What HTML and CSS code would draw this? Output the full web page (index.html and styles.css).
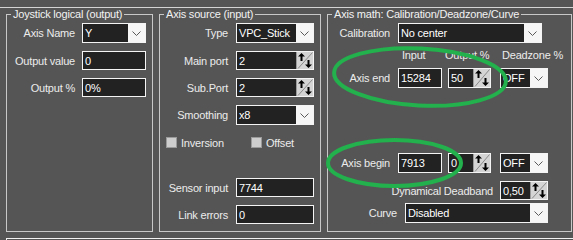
FILE: index.html
```html
<!DOCTYPE html>
<html lang="en">
<head>
    <meta charset="UTF-8">
    <meta name="viewport" content="width=device-width, initial-scale=1">
    <link rel="stylesheet" href="styles.css">
</head>
<body>

<div class="frame-top"></div>

<div class="groups">

    <!-- Joystick logical (output) -->
    <fieldset class="group g-output">
        <legend>Joystick logical (output)</legend>
        <div class="form form-output">
            <label>Axis Name</label>
            <div class="combo">
                <span class="combo-text">Y</span>
                <span class="combo-btn"><svg width="9" height="5" viewBox="0 0 9 5"><path d="M0.5 0.5 L4.5 4.5 L8.5 0.5" fill="none" stroke="#5a5a5a"/></svg></span>
            </div>
            <label>Output value</label>
            <div class="edit">0</div>
            <label>Output %</label>
            <div class="edit">0%</div>
        </div>
    </fieldset>

    <!-- Axis source (input) -->
    <fieldset class="group g-source">
        <legend>Axis source (input)</legend>
        <div class="form form-source">
            <label>Type</label>
            <div class="combo">
                <span class="combo-text">VPC_Stick</span>
                <span class="combo-btn"><svg width="9" height="5" viewBox="0 0 9 5"><path d="M0.5 0.5 L4.5 4.5 L8.5 0.5" fill="none" stroke="#5a5a5a"/></svg></span>
            </div>
            <label>Main port</label>
            <div class="edit spin">
                <span class="spin-text">2</span>
                <span class="spin-btn"><svg width="16" height="17" viewBox="0 0 16 17"><path d="M1 16.5 L15.5 0.5" stroke="#8a8a8a"/><path d="M4.5 1 L1 4.5 H3.5 V9 H5.5 V4.5 H8 Z" fill="#000"/><path d="M11.5 16 L8 12.5 H10.5 V8 H12.5 V12.5 H15 Z" fill="#000"/></svg></span>
            </div>
            <label>Sub.Port</label>
            <div class="edit spin">
                <span class="spin-text">2</span>
                <span class="spin-btn"><svg width="16" height="17" viewBox="0 0 16 17"><path d="M1 16.5 L15.5 0.5" stroke="#8a8a8a"/><path d="M4.5 1 L1 4.5 H3.5 V9 H5.5 V4.5 H8 Z" fill="#000"/><path d="M11.5 16 L8 12.5 H10.5 V8 H12.5 V12.5 H15 Z" fill="#000"/></svg></span>
            </div>
            <label>Smoothing</label>
            <div class="combo">
                <span class="combo-text">x8</span>
                <span class="combo-btn"><svg width="9" height="5" viewBox="0 0 9 5"><path d="M0.5 0.5 L4.5 4.5 L8.5 0.5" fill="none" stroke="#5a5a5a"/></svg></span>
            </div>
        </div>

        <div class="checks">
            <div class="check check-first"><span class="box"></span>Inversion</div>
            <div class="check"><span class="box"></span>Offset</div>
        </div>

        <div class="form form-source form-sensor">
            <label>Sensor input</label>
            <div class="edit">7744</div>
            <label>Link errors</label>
            <div class="edit">0</div>
        </div>
    </fieldset>

    <!-- Axis math -->
    <fieldset class="group g-math">
        <legend>Axis math: Calibration/Deadzone/Curve</legend>

        <div class="row row-calib">
            <label class="math-label">Calibration</label>
            <div class="combo w-calib">
                <span class="combo-text">No center</span>
                <span class="combo-btn"><svg width="9" height="5" viewBox="0 0 9 5"><path d="M0.5 0.5 L4.5 4.5 L8.5 0.5" fill="none" stroke="#5a5a5a"/></svg></span>
            </div>
        </div>

        <div class="heads">
            <span class="head-input">Input</span>
            <span class="head-output">Output %</span>
            <span>Deadzone %</span>
        </div>

        <div class="row row-end">
            <label class="math-label">Axis end</label>
            <div class="edit w-input">15284</div>
            <div class="edit spin w-output">
                <span class="spin-text">50</span>
                <span class="spin-btn"><svg width="16" height="18" viewBox="0 0 16 18"><path d="M1 17.5 L15.5 0.5" stroke="#8a8a8a"/><path d="M4.5 1 L1 4.5 H3.5 V9 H5.5 V4.5 H8 Z" fill="#000"/><path d="M11.5 17 L8 13.5 H10.5 V9 H12.5 V13.5 H15 Z" fill="#000"/></svg></span>
            </div>
            <div class="combo w-dead">
                <span class="combo-text">OFF</span>
                <span class="combo-btn"><svg width="9" height="5" viewBox="0 0 9 5"><path d="M0.5 0.5 L4.5 4.5 L8.5 0.5" fill="none" stroke="#5a5a5a"/></svg></span>
            </div>
        </div>

        <div class="row row-begin">
            <label class="math-label">Axis begin</label>
            <div class="edit w-input">7913</div>
            <div class="edit spin w-output">
                <span class="spin-text">0</span>
                <span class="spin-btn"><svg width="16" height="18" viewBox="0 0 16 18"><path d="M1 17.5 L15.5 0.5" stroke="#8a8a8a"/><path d="M4.5 1 L1 4.5 H3.5 V9 H5.5 V4.5 H8 Z" fill="#000"/><path d="M11.5 17 L8 13.5 H10.5 V9 H12.5 V13.5 H15 Z" fill="#000"/></svg></span>
            </div>
            <div class="combo w-dead">
                <span class="combo-text">OFF</span>
                <span class="combo-btn"><svg width="9" height="5" viewBox="0 0 9 5"><path d="M0.5 0.5 L4.5 4.5 L8.5 0.5" fill="none" stroke="#5a5a5a"/></svg></span>
            </div>
        </div>

        <div class="row row-right row-dyn">
            <label>Dynamical Deadband</label>
            <div class="edit spin w-dead">
                <span class="spin-text">0,50</span>
                <span class="spin-btn"><svg width="16" height="17" viewBox="0 0 16 17"><path d="M1 16.5 L15.5 0.5" stroke="#8a8a8a"/><path d="M4.5 1 L1 4.5 H3.5 V9 H5.5 V4.5 H8 Z" fill="#000"/><path d="M11.5 16 L8 12.5 H10.5 V8 H12.5 V12.5 H15 Z" fill="#000"/></svg></span>
            </div>
        </div>

        <div class="row row-right row-curve">
            <label>Curve</label>
            <div class="combo w-curve">
                <span class="combo-text">Disabled</span>
                <span class="combo-btn"><svg width="9" height="5" viewBox="0 0 9 5"><path d="M0.5 0.5 L4.5 4.5 L8.5 0.5" fill="none" stroke="#5a5a5a"/></svg></span>
            </div>
        </div>
    </fieldset>

</div>

<div class="frame-bottom"></div>

<!-- hand drawn marks on top of the screenshot -->
<svg class="marks" width="573" height="240" viewBox="0 0 573 240">
    <ellipse cx="420" cy="77" rx="86" ry="28.5" transform="rotate(3 420 77)" fill="none" stroke="#22b14c" stroke-width="4"/>
    <ellipse cx="394.5" cy="163" rx="66.5" ry="23" fill="none" stroke="#22b14c" stroke-width="4"/>
</svg>

</body>
</html>
```

FILE: styles.css
```css
* {
    box-sizing: border-box;
}

body {
    margin: 0;
    width: 573px;
    height: 240px;
    overflow: hidden;
    position: relative;
    background-color: #555555;
    font-family: "Liberation Sans", Arial, sans-serif;
    font-size: 11px;
    letter-spacing: -0.2px;
    color: #ececec;
}

.frame-top {
    margin-top: 7px;
    border-top: 1px solid #d4d4d4;
}

.groups {
    display: flex;
    gap: 6px;
    padding-left: 6px;
    height: 224px;
}

.group {
    margin: 0;
    padding: 0;
    min-width: 0;
    flex: none;
    border: 1px solid #c8c8c8;
}

.group legend {
    margin-left: 4px;
    padding: 0 2px;
    line-height: 13px;
    color: #f2f2f2;
}

.g-output {
    width: 147px;
}

.g-source {
    width: 162px;
}

.g-math {
    width: 245px;
}

/* label / control grids */
.form {
    display: grid;
    align-items: center;
    row-gap: 8px;
    margin-top: 2px;
}

.form label {
    text-align: right;
    white-space: nowrap;
}

.form-output {
    grid-template-columns: 68px 64px;
    column-gap: 7px;
}

.form-source {
    grid-template-columns: 68px 78px;
    column-gap: 8px;
}

.form-sensor {
    margin-top: 30px;
}

/* controls */
.edit,
.combo {
    display: flex;
    align-items: center;
    height: 19px;
    border: 1px solid #f4f4f4;
    background-color: #222222;
    color: #ffffff;
    padding-left: 2px;
    white-space: nowrap;
    overflow: hidden;
}

.combo {
    height: 20px;
    padding-left: 0;
}

.combo-text {
    flex: 1;
    padding-left: 2px;
}

.combo-btn {
    width: 17px;
    height: 100%;
    display: flex;
    align-items: center;
    justify-content: center;
    background-color: #f6f6f6;
}

.spin {
    padding-left: 0;
}

.spin-text {
    flex: 1;
    padding-left: 2px;
}

.spin-btn {
    width: 17px;
    height: 100%;
    display: flex;
    align-items: center;
    justify-content: center;
    background-color: #d4d4d4;
    border-left: 1px solid #9c9c9c;
}

/* checkboxes */
.checks {
    display: flex;
    height: 11px;
    margin-top: 12px;
    padding-left: 6px;
}

.check {
    display: flex;
    align-items: center;
    gap: 4px;
}

.check-first {
    width: 85px;
}

.box {
    width: 11px;
    height: 11px;
    border: 1px solid #9a9a9a;
    background-color: #cdcdcd;
}

/* axis math rows */
.row {
    display: flex;
    align-items: center;
}

.row label {
    white-space: nowrap;
}

.math-label {
    width: 62px;
    margin-right: 8px;
    text-align: right;
}

.row-calib {
    margin-top: 2px;
}

.w-calib {
    width: 144px;
}

.heads {
    display: flex;
    margin-top: 6px;
    padding-left: 74px;
    line-height: 13px;
    white-space: nowrap;
}

.head-input {
    width: 43px;
}

.head-output {
    width: 57px;
}

.row-end {
    margin-top: 6px;
}

.row-begin {
    margin-top: 65px;
}

.w-input {
    width: 44px;
    height: 20px;
}

.w-output {
    width: 43px;
    height: 20px;
    margin-left: 6px;
}

.w-dead {
    width: 48px;
    margin-left: 9px;
}

.row-right {
    width: 220px;
    justify-content: flex-end;
}

.row-dyn {
    margin-top: 8px;
}

.row-dyn label {
    margin-right: -2px;
}

.row-curve {
    margin-top: 3px;
}

.row-curve label {
    margin-right: 8px;
}

.w-curve {
    width: 143px;
}

.frame-bottom {
    margin: 6px 0 0 6px;
    height: 10px;
    border-top: 1px solid #f2f2f2;
    border-left: 1px solid #f2f2f2;
}

/* green marker ellipses over the form */
.marks {
    position: absolute;
    top: 0;
    left: 0;
    pointer-events: none;
}
```
